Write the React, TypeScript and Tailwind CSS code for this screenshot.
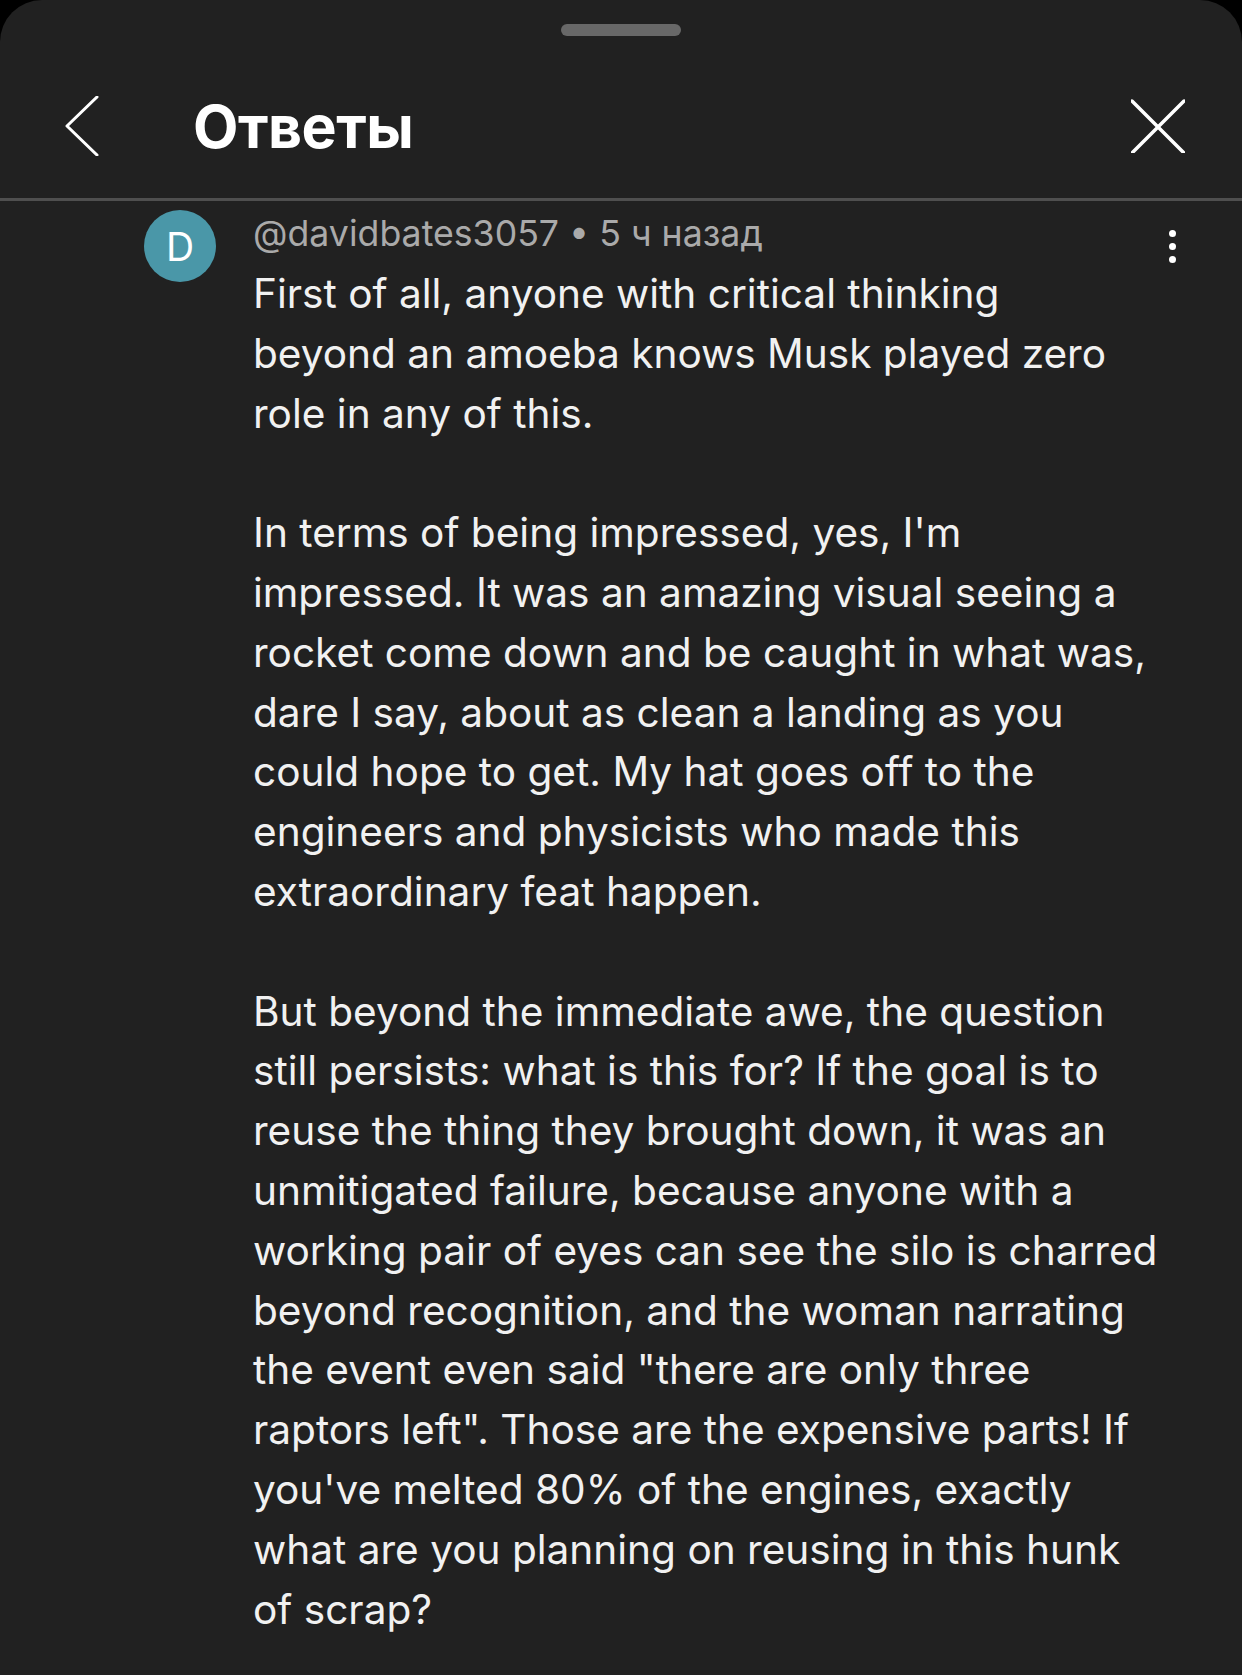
const paragraphs: string[][] = [
    [
        'First of all, anyone with critical thinking',
        'beyond an amoeba knows Musk played zero',
        'role in any of this.',
    ],
    [
        "In terms of being impressed, yes, I'm",
        'impressed. It was an amazing visual seeing a',
        'rocket come down and be caught in what was,',
        'dare I say, about as clean a landing as you',
        'could hope to get. My hat goes off to the',
        'engineers and physicists who made this',
        'extraordinary feat happen.',
    ],
    [
        'But beyond the immediate awe, the question',
        'still persists: what is this for? If the goal is to',
        'reuse the thing they brought down, it was an',
        'unmitigated failure, because anyone with a',
        'working pair of eyes can see the silo is charred',
        'beyond recognition, and the woman narrating',
        'the event even said "there are only three',
        'raptors left". Those are the expensive parts! If',
        "you've melted 80% of the engines, exactly",
        'what are you planning on reusing in this hunk',
        'of scrap?',
    ],
];

function CloseIcon() {
    return (
        <svg width="54" height="54" viewBox="0 0 54 54" fill="none">
            <path d="M1 2 L53 54 M53 2 L1 54" stroke="#ffffff" strokeWidth="3.5" strokeLinecap="round" />
        </svg>
    );
}

function BackIcon() {
    return (
        <svg width="34" height="60" viewBox="0 0 34 60" fill="none">
            <path d="M32 1 L2 30 L32 59" stroke="#ffffff" strokeWidth="3" strokeLinecap="round" strokeLinejoin="round" />
        </svg>
    );
}

function App() {
    return (
        <div className="w-[1242px] h-[1675px] bg-black overflow-hidden" style={{ fontFamily: 'Inter, "Noto Sans", sans-serif' }}>
            <div className="h-full bg-[#212121] rounded-t-[42px] flex flex-col">
                {/* Drag handle */}
                <div className="pt-[24px] flex justify-center">
                    <div className="w-[120px] h-[12px] rounded-full bg-[#686868]" />
                </div>

                {/* Header */}
                <header className="mt-[40px] h-[100px] flex items-center pl-[65px] pr-[57px]">
                    <BackIcon />
                    <h1 className="ml-[94px] text-[59px] font-bold text-white tracking-[-0.5px] leading-none">Ответы</h1>
                    <div className="ml-auto">
                        <CloseIcon />
                    </div>
                </header>
                <div className="mt-[22px] h-[3px] bg-[#4f4f4f]" />

                {/* Comment */}
                <div className="pt-[9px] flex pl-[144px] pr-[66px]">
                    <div className="w-[72px] h-[72px] rounded-full bg-[#4a97a8] flex items-center justify-center shrink-0">
                        <span className="text-[39px] text-white leading-none">D</span>
                    </div>
                    <div className="ml-[37px] flex-1">
                        <div className="flex items-start">
                            <p className="text-[35.7px] leading-[46px] text-[#aaaaaa] whitespace-nowrap">
                                @davidbates3057 • 5 ч назад
                            </p>
                            <div className="ml-auto mt-[20px] flex flex-col gap-[6px] items-center">
                                <span className="w-[7px] h-[7px] rounded-full bg-white" />
                                <span className="w-[7px] h-[7px] rounded-full bg-white" />
                                <span className="w-[7px] h-[7px] rounded-full bg-white" />
                            </div>
                        </div>
                        <div className="mt-[1px] text-[40.6px] leading-[59.8px] text-[#f1f1f1]">
                            {paragraphs.map((lines, i) => (
                                <div key={i} className={i > 0 ? 'mt-[59.8px]' : ''}>
                                    {lines.map((line, j) => (
                                        <div key={j} className="whitespace-nowrap">
                                            {line}
                                        </div>
                                    ))}
                                </div>
                            ))}
                        </div>
                    </div>
                </div>
            </div>
        </div>
    );
}

export default App;
